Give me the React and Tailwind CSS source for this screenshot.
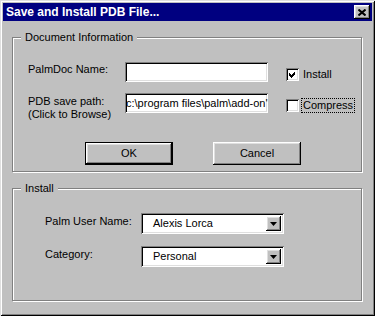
import React from "react";

const raised =
  "shadow-[inset_-1px_-1px_0_#000,inset_1px_1px_0_#fff,inset_-2px_-2px_0_#808080,inset_2px_2px_0_#dfdfdf]";
const sunken =
  "shadow-[inset_1px_1px_0_#808080,inset_-1px_-1px_0_#fff,inset_2px_2px_0_#000,inset_-2px_-2px_0_#dfdfdf]";
const etched = "border border-[#808080] shadow-[inset_1px_1px_0_#fff,1px_1px_0_#fff]";

function CheckBox({ checked, label, focused }) {
  return (
    <div className="flex items-center gap-[2px] mt-[5px]">
      <div className={`w-[13px] h-[13px] bg-white ${sunken}`}>
        {checked && (
          <svg width="13" height="13" viewBox="0 0 13 13" shapeRendering="crispEdges">
            <polygon points="3,5 5,7 9,3 9,6 5,10 3,8" fill="#000" />
          </svg>
        )}
      </div>
      <span
        className={`px-[1px] leading-[13px] border ${
          focused ? "border-dotted border-black" : "border-transparent"
        }`}
      >
        {label}
      </span>
    </div>
  );
}

function Combo({ value }) {
  return (
    <div className={`w-[143px] h-[21px] bg-white flex items-center p-[2px] ${sunken}`}>
      <span className="flex-1 pl-[10px] leading-[13px]">{value}</span>
      <div className={`w-[15px] h-[15px] mr-[1px] bg-[#c0c0c0] flex items-center justify-center ${raised}`}>
        <svg width="7" height="4" viewBox="0 0 7 4">
          <polygon points="0,0 7,0 3.5,4" fill="#000" />
        </svg>
      </div>
    </div>
  );
}

export default function App() {
  return (
    <div className="w-[375px] h-[316px] bg-[#c0c0c0] p-[3px] text-[11px] text-black font-['Liberation_Sans',Arial,sans-serif] shadow-[inset_1px_1px_0_#dfdfdf,inset_-1px_-1px_0_#000,inset_2px_2px_0_#fff,inset_-2px_-2px_0_#808080]">
      {/* Title bar */}
      <div className="h-[18px] bg-[#000080] flex items-center justify-between pl-[3px] pr-[2px]">
        <span className="text-white font-bold text-[12px] leading-[14px]">Save and Install PDB File...</span>
        <div className={`w-[16px] h-[14px] bg-[#c0c0c0] flex items-center justify-center ${raised}`}>
          <svg width="8" height="7" viewBox="0 0 8 7">
            <path d="M0.5 0.5 L7.5 6.5 M7.5 0.5 L0.5 6.5" stroke="#000" strokeWidth="2" />
          </svg>
        </div>
      </div>

      {/* Document Information */}
      <div className={`relative ml-[9px] mt-[16px] w-[350px] h-[135px] ${etched}`}>
        <span className="absolute -top-[7px] left-[8px] px-[4px] bg-[#c0c0c0] leading-[13px]">
          Document Information
        </span>
        <div className="pt-[24px] pl-[15px]">
          <div className="flex items-start">
            <span className="w-[97px] mt-[1px] leading-[13px]">PalmDoc Name:</span>
            <div className={`w-[143px] h-[20px] bg-white ${sunken}`} />
            <div className="ml-[18px]">
              <CheckBox checked label="Install" />
            </div>
          </div>
          <div className="flex items-start mt-[11px]">
            <div className="w-[97px] mt-[2px] leading-[13px]">
              <div>PDB save path:</div>
              <div>(Click to Browse)</div>
            </div>
            <div className={`w-[143px] h-[20px] bg-white flex items-center pl-[1px] ${sunken}`}>
              <span className="whitespace-nowrap leading-[13px]">c:\program files\palm\add-on'</span>
            </div>
            <div className="ml-[18px]">
              <CheckBox label="Compress" focused />
            </div>
          </div>
          <div className="flex mt-[21px] ml-[57px] gap-[40px]">
            <button className={`w-[88px] h-[23px] border border-black bg-[#c0c0c0] flex items-center justify-center ${raised}`}>
              OK
            </button>
            <button className={`w-[88px] h-[23px] bg-[#c0c0c0] flex items-center justify-center ${raised}`}>
              Cancel
            </button>
          </div>
        </div>
      </div>

      {/* Install */}
      <div className={`relative ml-[9px] mt-[16px] w-[350px] h-[113px] ${etched}`}>
        <span className="absolute -top-[7px] left-[8px] px-[4px] bg-[#c0c0c0] leading-[13px]">Install</span>
        <div className="pt-[24px] pl-[32px]">
          <div className="flex items-start">
            <span className="w-[96px] mt-[2px] leading-[13px]">Palm User Name:</span>
            <Combo value="Alexis Lorca" />
          </div>
          <div className="flex items-start mt-[12px]">
            <span className="w-[96px] mt-[2px] leading-[13px]">Category:</span>
            <Combo value="Personal" />
          </div>
        </div>
      </div>
    </div>
  );
}
